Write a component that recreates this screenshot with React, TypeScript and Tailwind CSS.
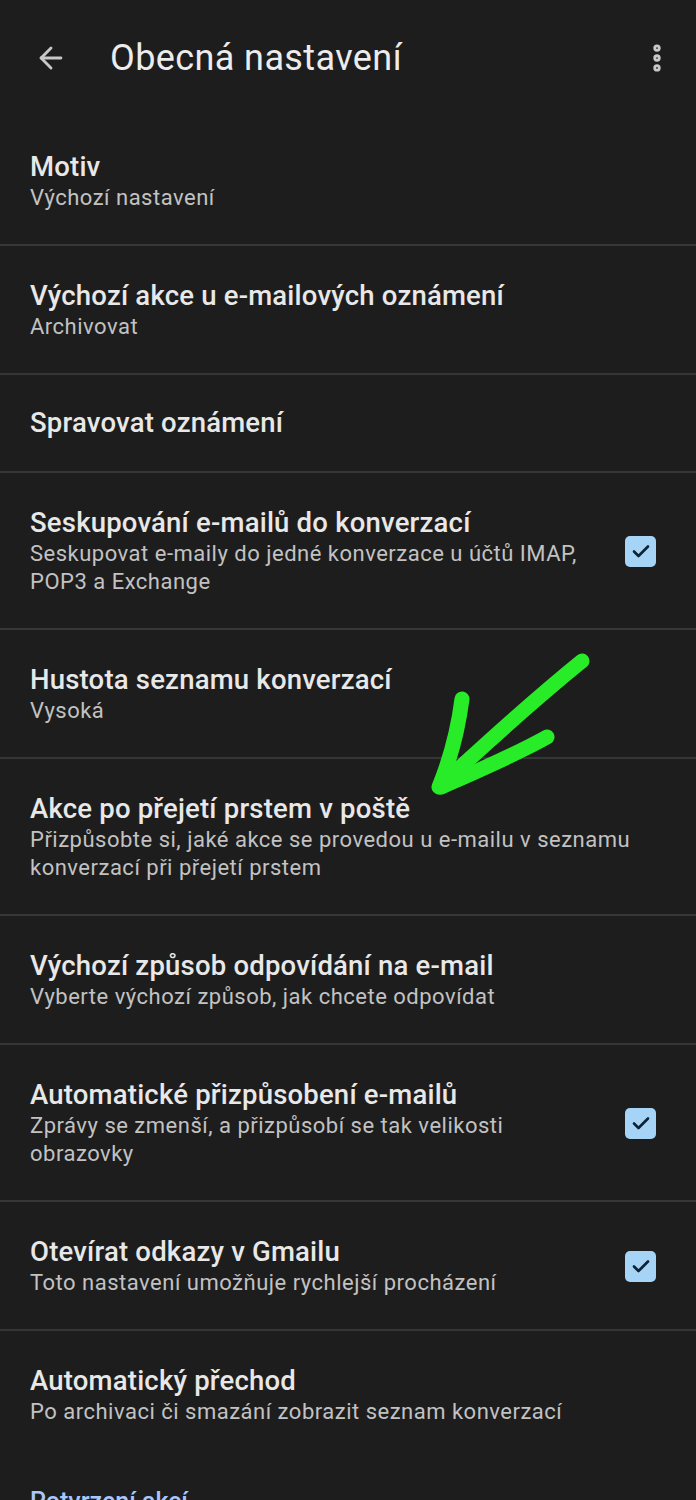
import { ArrowLeft, EllipsisVertical } from "lucide-react";

type Row = { title: string; sub?: string; checked?: boolean };

const rows: Row[] = [
  { title: "Motiv", sub: "Výchozí nastavení" },
  { title: "Výchozí akce u e-mailových oznámení", sub: "Archivovat" },
  { title: "Spravovat oznámení" },
  {
    title: "Seskupování e-mailů do konverzací",
    sub: "Seskupovat e-maily do jedné konverzace u účtů IMAP, POP3 a Exchange",
    checked: true,
  },
  { title: "Hustota seznamu konverzací", sub: "Vysoká" },
  {
    title: "Akce po přejetí prstem v poště",
    sub: "Přizpůsobte si, jaké akce se provedou u e-mailu v seznamu konverzací při přejetí prstem",
  },
  { title: "Výchozí způsob odpovídání na e-mail", sub: "Vyberte výchozí způsob, jak chcete odpovídat" },
  {
    title: "Automatické přizpůsobení e-mailů",
    sub: "Zprávy se zmenší, a přizpůsobí se tak velikosti obrazovky",
    checked: true,
  },
  { title: "Otevírat odkazy v Gmailu", sub: "Toto nastavení umožňuje rychlejší procházení", checked: true },
  { title: "Automatický přechod", sub: "Po archivaci či smazání zobrazit seznam konverzací" },
];

const Checkbox = () => (
  <div className="w-[31px] h-[31px] rounded-[5px] bg-[#a6d4f7] flex items-center justify-center shrink-0">
    <svg viewBox="0 0 24 24" className="w-[24px] h-[24px]" fill="none" stroke="#0d2235" strokeWidth="2.6" strokeLinecap="round" strokeLinejoin="round">
      <path d="M5 12.5l4.5 4.5L19 7.5" />
    </svg>
  </div>
);

export default function App() {
  return (
    <div className="relative w-[696px] h-[1500px] overflow-hidden bg-[#1d1d1d] font-['Roboto',sans-serif]">
      {/* Top bar */}
      <div className="h-[117px] flex items-center pb-[1px]">
        <div className="w-[110px] pl-[34px] flex items-center">
          <ArrowLeft className="w-[34px] h-[34px] text-[#c8c8c8]" strokeWidth={2} />
        </div>
        <h1 className="flex-1 text-[36px] tracking-[0.4px] text-[#ececec]">Obecná nastavení</h1>
        <div className="pr-[22px]">
          <EllipsisVertical className="w-[34px] h-[34px] text-[#c8c8c8]" strokeWidth={3.2} />
        </div>
      </div>

      {rows.map((row, i) => (
        <div key={i}>
          {i > 0 && <div className="h-[2px] bg-[#363636]" />}
          <div className={`flex items-center pl-[30px] pr-[40px] ${row.sub ? "pt-[33px] pb-[32px]" : "py-[31px]"}`}>
            <div className={`flex-1 ${row.checked ? "pr-[20px]" : ""}`}>
              <div className="text-[27.5px] leading-[34px] tracking-[0.2px] font-medium text-[#e8e8e8]">{row.title}</div>
              {row.sub && (
                <div className="text-[22px] leading-[28px] tracking-[0.5px] text-[#c2c2c2]">{row.sub}</div>
              )}
            </div>
            {row.checked && <Checkbox />}
          </div>
        </div>
      ))}

      <div className="pl-[30px] pt-[28px] text-[25px] leading-[32px] font-medium text-[#a8c7fa]">Potvrzení akcí</div>

      {/* Green annotation arrow */}
      <svg className="absolute left-0 top-0 pointer-events-none" width="696" height="1500" fill="none" stroke="#27ec27" strokeWidth="15" strokeLinecap="round" strokeLinejoin="round">
        <path d="M582 661 C540 695 495 735 440 786" />
        <path d="M462 699 C458 730 450 760 439 787" />
        <path d="M547 737 C515 755 480 770 441 787" />
      </svg>
    </div>
  );
}
